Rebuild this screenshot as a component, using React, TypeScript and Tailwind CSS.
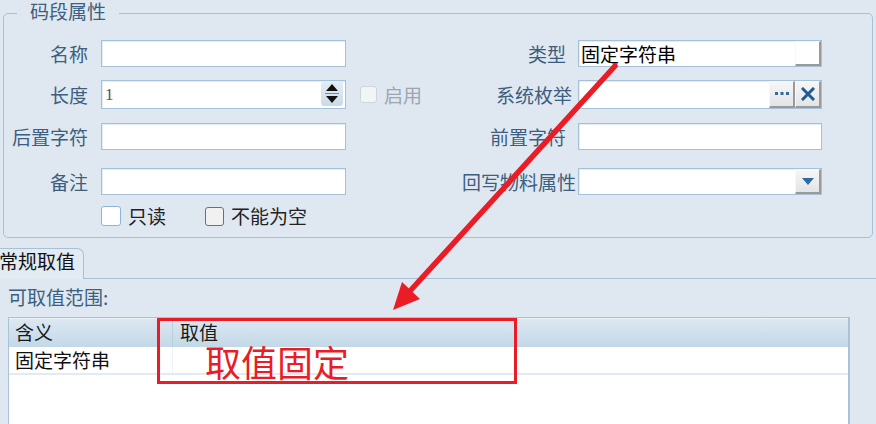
import React from "react";

const FONT = { fontFamily: '"Noto Sans CJK SC", "Noto Sans", sans-serif' };

function Label({ text, className = "" }: { text: string; className?: string }) {
  return (
    <div className={"text-[19px] leading-[27px] text-[#3d5e80] whitespace-nowrap " + className}>{text}</div>
  );
}

function TextBox({ className = "", children }: { className?: string; children?: React.ReactNode }) {
  return (
    <div
      className={
        "flex items-stretch bg-white border border-[#a5c1d9] shadow-[inset_1px_1px_0_#e3edf5] " + className
      }
    >
      {children}
    </div>
  );
}

function BevelBtn({ children, white = false }: { children?: React.ReactNode; white?: boolean }) {
  return (
    <div
      className={
        "w-[26px] flex items-center justify-center border-t border-l border-t-[#f8f8f8] border-l-[#f8f8f8] border-r-2 border-b-2 border-r-[#9a9a9a] border-b-[#9a9a9a] " +
        (white ? "bg-white" : "bg-gradient-to-b from-[#f6f6f6] to-[#e2e4e6]")
      }
    >
      {children}
    </div>
  );
}

export default function App() {
  return (
    <div className="relative w-[876px] h-[424px] overflow-hidden bg-[#dfe8f0]" style={FONT}>
      {/* fieldset */}
      <fieldset className="ml-[3px] w-[870px] h-[238px] border border-[#a7c0d5] rounded-[5px] p-0 m-0">
        <legend className="ml-[13px] px-[13px] text-[19px] leading-[22px] pb-[4px] text-[#3d5e80]">码段属性</legend>
        {/* row 1 */}
        <div className="flex h-[27px] mt-[14px]">
          <Label text="名称" className="w-[84px] text-right" />
          <TextBox className="ml-[13px] w-[245px]" />
          <div className="w-[232px] flex justify-end pr-[12px]">
            <Label text="类型" />
          </div>
          <TextBox className="w-[244px]">
            <div className="flex-1 pl-[2px] text-[19px] leading-[25px] text-black">固定字符串</div>
            <BevelBtn white />
          </TextBox>
        </div>
        {/* row 2 */}
        <div className="flex h-[29px] mt-[13px]">
          <Label text="长度" className="w-[84px] text-right leading-[29px]" />
          <TextBox className="ml-[13px] w-[245px] items-center">
            <div
              className="flex-1 pl-[3px] text-[17px] leading-[27px] text-[#555]"
              style={{ fontFamily: '"Liberation Serif", serif' }}
            >
              1
            </div>
            <div className="mr-[2px] w-[22px] h-[25px] rounded-[3px] bg-gradient-to-b from-[#e4eef6] to-[#c9dbe9] flex flex-col items-center justify-center gap-[2px]">
              <svg width="12" height="7" viewBox="0 0 12 7">
                <polygon points="6,0 12,7 0,7" fill="#111" />
              </svg>
              <div className="w-[14px] h-px bg-[#7a8a98]" />
              <svg width="12" height="7" viewBox="0 0 12 7">
                <polygon points="0,0 12,0 6,7" fill="#111" />
              </svg>
            </div>
          </TextBox>
          <div className="w-[232px] flex items-center">
            <div className="ml-[14px] w-[17px] h-[17px] rounded-[3px] border border-[#cdd6de] bg-[#f2f5f8]" />
            <div className="ml-[7px] text-[19px] leading-[29px] text-[#9ba6b1]">启用</div>
            <div className="flex-1 flex justify-end pr-[6px]">
              <Label text="系统枚举" className="leading-[29px]" />
            </div>
          </div>
          <TextBox className="w-[244px]">
            <div className="flex-1" />
            <BevelBtn>
              <svg width="14" height="4" viewBox="0 0 14 4">
                <rect x="0" y="0" width="3" height="3" fill="#2f6aa6" />
                <rect x="5.5" y="0" width="3" height="3" fill="#2f6aa6" />
                <rect x="11" y="0" width="3" height="3" fill="#2f6aa6" />
              </svg>
            </BevelBtn>
            <BevelBtn>
              <svg width="14" height="14" viewBox="0 0 14 14">
                <path d="M2 2 L12 12 M12 2 L2 12" stroke="#1f5a95" strokeWidth="3" strokeLinecap="square" />
              </svg>
            </BevelBtn>
          </TextBox>
        </div>
        {/* row 3 */}
        <div className="flex h-[27px] mt-[14px]">
          <Label text="后置字符" className="w-[84px] text-right" />
          <TextBox className="ml-[13px] w-[245px]" />
          <div className="w-[232px] flex justify-end pr-[12px]">
            <Label text="前置字符" />
          </div>
          <TextBox className="w-[244px]" />
        </div>
        {/* row 4 */}
        <div className="flex h-[27px] mt-[18px]">
          <Label text="备注" className="w-[84px] text-right" />
          <TextBox className="ml-[13px] w-[245px]" />
          <div className="w-[232px] flex justify-end pr-[2px]">
            <Label text="回写物料属性" />
          </div>
          <TextBox className="w-[244px]">
            <div className="flex-1" />
            <BevelBtn>
              <svg width="12" height="7" viewBox="0 0 12 7">
                <polygon points="0,0 12,0 6,7" fill="#2f6aa6" />
              </svg>
            </BevelBtn>
          </TextBox>
        </div>
        {/* checkboxes */}
        <div className="flex items-center h-[24px] mt-[9px] pl-[97px]">
          <div className="w-[20px] h-[20px] rounded-[3px] border border-[#8fb4d8] bg-white" />
          <div className="ml-[7px] text-[19px] leading-[24px] text-[#222]">只读</div>
          <div className="ml-[39px] w-[19px] h-[19px] rounded-[3px] border-[1.5px] border-[#6f6f6f] bg-[#f1f1f1]" />
          <div className="ml-[7px] text-[19px] leading-[24px] text-[#222]">不能为空</div>
        </div>
      </fieldset>

      {/* tab strip */}
      <div className="flex h-[31px] mt-[10px]">
        <div className="w-[85px] -ml-[1px] border border-b-0 border-[#a7c0d5] rounded-tr-[7px] bg-[#e2eaf2]">
          <div className="-ml-[1px] text-[19px] leading-[24px] text-[#111] whitespace-nowrap">常规取值</div>
        </div>
        <div className="flex-1 border-b border-[#a7c0d5]" />
      </div>

      <div className="ml-[8px] mt-[6px] text-[19px] leading-[24px] text-[#3d5e80]">可取值范围:</div>

      {/* table */}
      <div className="ml-[8px] mt-[8px] w-[842px] h-[120px] border border-[#a9c2d7] border-r-2 bg-white">
        <div className="flex h-[29px] bg-gradient-to-b from-[#dce8f2] to-[#c3d8e7] border-t border-[#e9f1f7]">
          <div className="w-[164px] border-r border-[#b9cfe0] pl-[6px] text-[19px] leading-[26px] text-[#1a1a1a]">含义</div>
          <div className="flex-1 pl-[7px] text-[19px] leading-[26px] text-[#1a1a1a]">取值</div>
        </div>
        <div className="flex h-[28px] border-b-2 border-[#e2ebf3]">
          <div className="w-[164px] border-r border-[#eef2f6] pl-[6px] text-[19px] leading-[26px] text-[#111]">固定字符串</div>
          <div className="flex-1" />
        </div>
      </div>

      {/* annotation: red box */}
      <div className="absolute left-[157px] top-[318px] w-[360px] h-[66px] border-[3px] border-[#ea1c25]">
        <div className="ml-[45px] mt-[21px] text-[36px] leading-[38px] text-[#ea1c25] whitespace-nowrap">取值固定</div>
      </div>

      {/* annotation: arrow */}
      <svg className="absolute left-0 top-0 pointer-events-none" width="876" height="424" viewBox="0 0 876 424">
        <line x1="615" y1="66" x2="410" y2="291" stroke="#ea1c25" strokeWidth="5.5" strokeLinecap="round" />
        <polygon points="393,310 402,282 420,299" fill="#ea1c25" />
      </svg>
    </div>
  );
}
